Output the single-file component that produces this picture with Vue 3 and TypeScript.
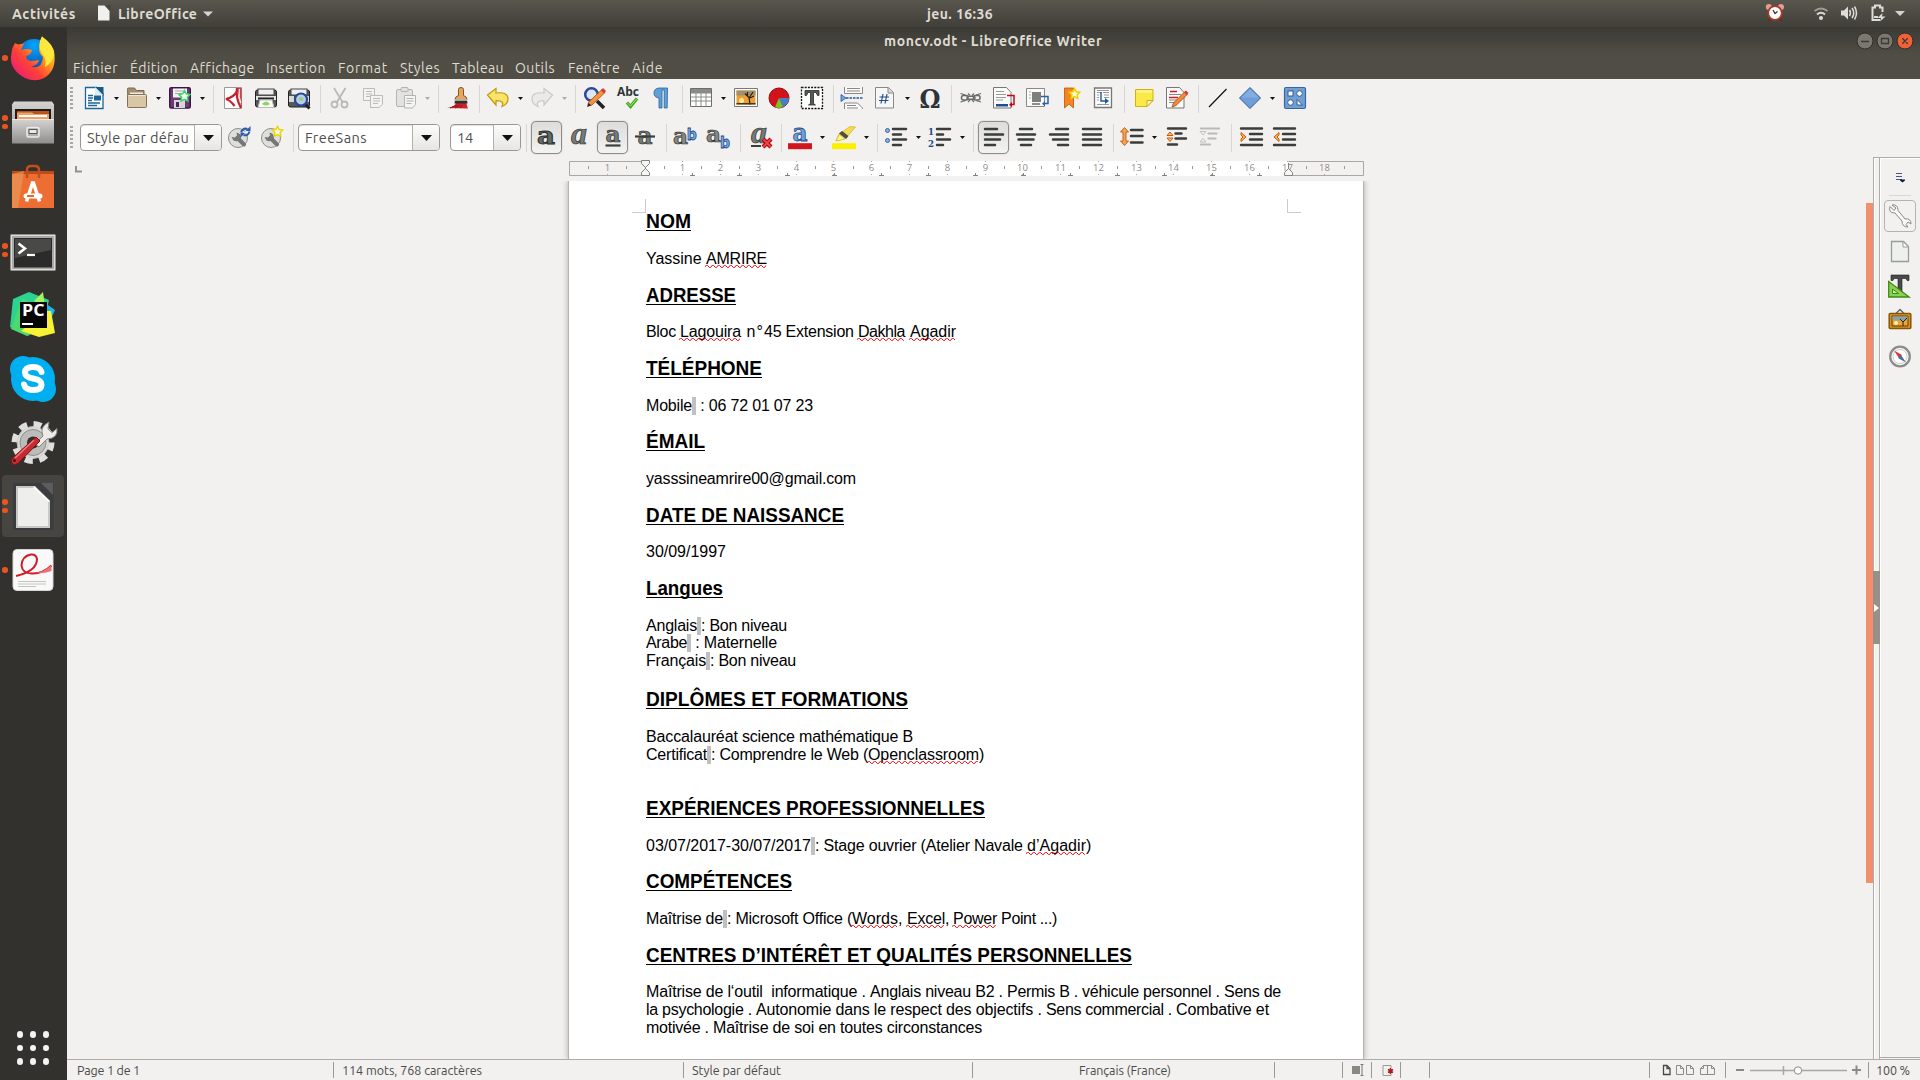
<script setup lang="ts">
interface Tool { k: string; c: number; w?: number; on?: boolean; off?: boolean; text?: string; tw?: number }
interface Seg { t: string; w: number; err?: boolean; nb?: boolean }
interface Line { y: number; h?: boolean; s: Seg[] }

// Makes a label fill the given width: headings are condensed, other texts get letter spacing
const vFit = {
  mounted(el: HTMLElement, binding: { value: number }) {
    const w = binding.value
    const natural = el.getBoundingClientRect().width
    el.style.width = `${w}px`
    if (el.closest('.head')) {
      el.style.transformOrigin = 'left'
      el.style.transform = `scaleX(${w / natural})`
    } else {
      const n = (el.textContent ?? '').length
      el.style.letterSpacing = `${(w - natural) / n}px`
    }
  },
}

const icons: Record<string, string> = {
  newdoc: `<path d="M3.5 1.5H15l6 6V22.5H3.5z" fill="#fff" stroke="#1d6497" stroke-width="1.3"/><path d="M13 1h8.5v9z" fill="#175a87"/><path d="M13 1v8h8" fill="#dcecf5"/><path d="M6 9.500h5M6 12h5M6 14.500h4M6 17h12M6 19.500h9" stroke="#1b6597" stroke-width="1.300"/><rect x="12" y="9.500" width="7" height="5" fill="#1b6597"/>`,
  folder: `<path d="M2.500 4.500V3q0-1 1-1h6l2 2.500h7.500V13h-16z" fill="#a58f70" stroke="#7b6a50"/><path d="M5 6.500h13V10H5z" fill="#eee"/><rect x="2.500" y="8.500" width="19" height="13" rx="1" fill="#d9c6a5" stroke="#84714f"/><path d="M3.500 9.500h17" stroke="#f1e6d0"/>`,
  save: `<rect x="1.700" y="1.700" width="20.600" height="20.300" rx="1.500" fill="#6d3a76" stroke="#3d1546" stroke-width="1.400"/><rect x="5" y="2.500" width="14" height="9" fill="#f2f2f2"/><path d="M7 5h10M7 7.500h10" stroke="#aaa"/><rect x="6" y="14" width="11" height="8" fill="#d8d4da"/><rect x="8" y="16" width="3" height="5" fill="#4b2653"/><path d="M16.500 4.500l1.800 3.300 3.700.7-2.600 2.800.5 3.700-3.400-1.600-3.400 1.600.5-3.700-2.600-2.800 3.700-.7z" fill="#f2fff2" stroke="#3ed667" stroke-width="1.500"/>`,
  pdf: `<path d="M3.500 1.500h17v21h-17z" fill="#fdfdfd" stroke="#999"/><path d="M16 2q-1.500 10 4 20M16 5q-2.500 6-11 8 4 1 8.500 7" fill="none" stroke="#c6222d" stroke-width="2.300"/><path d="M16 2h4.500v20z" fill="#c6222d" opacity=".85"/><path d="M18.300 3q-.8 8 1.500 14" stroke="#fff" fill="none"/>`,
  print: `<rect x="1.500" y="4" width="21" height="17" rx="2" fill="#55595a" stroke="#222"/><rect x="4" y="3" width="16" height="6" fill="#eee" stroke="#444"/><path d="M2 10h20v4H2z" fill="#e4e4e0"/><path d="M4 12.500h16" stroke="#222" stroke-width="2"/><path d="M6 14h12l2 7.500H4z" fill="#fbfff5" stroke="#bbb"/><path d="M8 18q4-5 8 0-4 3-8 0" fill="#8ed16a"/>`,
  preview: `<rect x="1.500" y="4" width="21" height="17" rx="2" fill="#55595a" stroke="#222"/><rect x="4" y="3" width="16" height="6" fill="#eee" stroke="#444"/><path d="M2 10h5v6H2zM18 10h4v6h-4z" fill="#d8d8d4"/><path d="M18 18l4.500 4.500" stroke="#222" stroke-width="3"/><circle cx="14" cy="13.500" r="6" fill="#b7cfe6" stroke="#27479b" stroke-width="2.200"/><path d="M11 13q3-4 6 0-3 4-6 0" fill="#9ccd82"/>`,
  cut: `<g fill="none" stroke="#b9b9b7" stroke-width="1.800"><path d="M6 2l8.500 14M17.500 2L9 16"/><circle cx="6.500" cy="18.500" r="3"/><circle cx="16.500" cy="18.500" r="3"/></g>`,
  copy: `<g fill="#f3f3f2" stroke="#bbbbb9"><path d="M2.500 2.500h11v12h-11z"/><path d="M5 5.500h6M5 8h6M5 10.500h4"/><path d="M9.500 9.500h12v9l-3.500 3h-8.500z"/><path d="M12 12.500h7M12 15h7M12 17.500h5"/></g>`,
  paste: `<g fill="#e2e2e0" stroke="#b4b4b2"><rect x="2.500" y="3.500" width="16" height="17" rx="1.500"/><rect x="7" y="1.500" width="7" height="4" rx="1"/><path d="M10.500 9.500h11v9l-3 3.500h-8z" fill="#f4f4f3"/><path d="M12.500 12.500h7M12.500 15h7M12.500 17.500h5"/></g>`,
  brush: `<path d="M1 22q8-1 9-5l10-1q1 4 2 6.500z" fill="#d22028"/><path d="M4 22l7-3M9 22l5-3M14 22l2-3" stroke="#8c1016"/><path d="M9 14h12l.5 3.500H8.500z" fill="#2f2f2f"/><path d="M9 13.500q0-3 3.500-4V3.500q0-2 2.500-2t2.500 2v6q3.500 1 3.500 4z" fill="#e2a75c" stroke="#84551c"/><path d="M9 14h12" stroke="#ccc" stroke-width="1.500"/>`,
  undo: `<path d="M1.500 9L10 2.500V7q12-1.500 12 6 0 5-6 7.500 3-6-6-5.800v4.300z" fill="#f7e468" stroke="#c39b08" stroke-width="1.200"/>`,
  redo: `<path d="M22.500 9L14 2.500V7Q2 5.500 2 13q0 5 6 7.500-3-6 6-5.800v4.300z" fill="#eaeaea" stroke="#cacac9" stroke-width="1.200"/>`,
  find: `<path d="M14 15l7 7" stroke="#222" stroke-width="3.500"/><circle cx="8.500" cy="8.500" r="6.300" fill="#dce7f4" stroke="#29479e" stroke-width="2.500"/><path d="M4.500 20.500l1.200-4.500L19 3.500l3 3L9 19z" fill="#f6913d" stroke="#a44b10" stroke-width=".8"/><path d="M18 4.500L20 2l3 3-2 2.500z" fill="#dc3b35"/><path d="M4.500 20.500l1-3.500 2.700 2.300z" fill="#222"/>`,
  abc: `<text x="12" y="10" text-anchor="middle" font-family="Open Sans, sans-serif" font-weight="700" font-size="11.500" textLength="22" lengthAdjust="spacingAndGlyphs" fill="#2e3436">Abc</text><path d="M11 16.500l3.500 4L21 12.500" fill="none" stroke="#3fa51a" stroke-width="3.200"/><path d="M11.300 16.800l3.200 3.300 6-7.200" fill="none" stroke="#a8ef73"/>`,
  para: `<path d="M18.500 2H10Q5 2.500 5 7t5 5v10h3V4h2.200v18h3z" fill="#629fd5" stroke="#2462a4" stroke-width=".8"/>`,
  table: `<path d="M1.500 2.500h21v18h-21z" fill="#fff" stroke="#6b6e6b"/><path d="M2 3h20v4.500H2z" fill="#888a85"/><path d="M2 11h20M2 15h20M7 3v17.500M12 3v17.500M17 3v17.500" stroke="#8b8e89" fill="none"/>`,
  image: `<path d="M.5 2.500h23v18H.5z" fill="#fff" stroke="#777"/><path d="M2.500 4.500h19v14h-19z" fill="#ed9f36"/><path d="M2.500 4.500h19v5h-19z" fill="#a3906c"/><circle cx="7.500" cy="14.500" r="2.500" fill="#ffec91"/><path d="M16 18.500l-1-7-4-4M15 12l4-6M16 12l4-2M13.500 10v-4" stroke="#251b10" stroke-width="1.200" fill="none"/><path d="M2.500 17h19v1.500h-19z" fill="#4b3216"/>`,
  chart: `<circle cx="12" cy="12" r="10" fill="#d2131b" stroke="#99090f"/><path d="M12 12h10A10 10 0 0 1 16 21z" fill="#477ec4"/><path d="M12 12l4 9a10 10 0 0 1-8 .3z" fill="#77c52b"/>`,
  frame: `<rect x="1.500" y="1.500" width="21" height="21" fill="#fff" stroke="#111" stroke-width="1.300" stroke-dasharray="2 1.200"/><path d="M5 4.500h14v5h-1.500L16 6.500h-2.500v11l2 1.500h-7l2-1.500v-11H8L6.500 9.500H5z" fill="#555a56" stroke="#2a2d2a" stroke-width=".8"/>`,
  pgbreak: `<g stroke="#888" fill="#fafafa"><path d="M4.500 1v6.500h18V1"/><path d="M7 2.500h13M7 5h13"/><path d="M4.500 23v-6h13l5 5v1"/><path d="M7 19.500h9M7 22h11"/></g><path d="M6 12h17" stroke="#1d58a6" stroke-width="1.500" stroke-dasharray="2.500 1"/><path d="M1 8.500l5 3.500-5 3.500z" fill="#7aa6dd" stroke="#1d58a6" stroke-width=".8"/>`,
  field: `<path d="M3.500 1.500h13l5 5v15.500h-18z" fill="#f7f7f7" stroke="#868886"/><path d="M16 1.500V7h5.500" fill="#ddd" stroke="#868886"/><path d="M9 17.500l2-9.500M13 17.500l2-9.500M7.500 11h9.500M7 14.500h9.500" stroke="#224d91" stroke-width="1.200"/>`,
  omega: `<text x="12" y="22" text-anchor="middle" font-family="DejaVu Serif, serif" font-weight="700" font-size="26" textLength="21" lengthAdjust="spacingAndGlyphs" fill="#2e3436">Ω</text>`,
  link: `<g fill="none" stroke="#686b68" stroke-width="1.500"><rect x="2.500" y="9.500" width="6.500" height="4.500" rx="2"/><rect x="8" y="10.200" width="8" height="3" rx="1.500"/><rect x="14.500" y="9.500" width="6.500" height="4.500" rx="2"/><path d="M1.500 7.500l5 1.500M1.500 16l5-1.500M22 7.500l-5 1.500M22 16l-5-1.500M9 7.500l2 2M9 16l2-2M15 7.500l-2 2M15 16l-2-2" stroke-width="1.200"/></g>`,
  footnote: `<path d="M1.500 1.500h13l4.500 5V22h-17.500z" fill="#fafafa" stroke="#777"/><path d="M4 5.500h8M4 8.500h10M4 11.500h10M4 14h7" stroke="#999"/><path d="M4 18h12v2.500H4z" fill="#1d4f91"/><path d="M15 9.500h7v9h-3" fill="none" stroke="#c00b12" stroke-width="1.500"/><path d="M20 16l-3 2.700 3 2.500z" fill="#c00b12"/>`,
  endnote: `<path d="M1.500 2.500h18v18h-18z" fill="#fafafa" stroke="#888"/><path d="M7 6h9v10H7z" fill="#7d807c"/><path d="M4 6h2M4 9h2M4 12h2" stroke="#aaa"/><path d="M7 18h8" stroke="#222"/><path d="M16 10.500h7v7h-4" fill="none" stroke="#2c61ab" stroke-width="1.500"/><path d="M20 15l-3 2.700 3 2.600z" fill="#2c61ab"/>`,
  bookmark: `<path d="M6.500 2h9v20l-4.500-4-4.500 4z" fill="#f5851f" stroke="#b95505" stroke-width=".8"/><path d="M16.500 2.500l1.700 3.200 3.600.5-2.600 2.600.6 3.600-3.300-1.700-3.200 1.700.6-3.600-2.600-2.600 3.600-.5z" fill="#fffbd2" stroke="#efd000" stroke-width="1.500"/>`,
  xref: `<path d="M3.500 2h17v19.500h-17z" fill="#fdfdfd" stroke="#777" stroke-width="1.300"/><path d="M6 4.500h12M6 6.500h5M12 6.500h6M13 9h5M13 11.500h5M6 18.500h12M6 9h2M6 11.500h2M6 14h2" stroke="#999"/><path d="M10 6v9h5" fill="none" stroke="#1d579e" stroke-width="1.400"/><path d="M14 12l4 3-4 3z" fill="#1d579e"/>`,
  note: `<path d="M3.500 3.500h17.500v11l-6 6H3.500z" fill="#fbe94a" stroke="#d0b310"/><path d="M4.500 4.500h15.500v2H4.500z" fill="#fff49a"/><path d="M21 14.500h-6v6z" fill="#fffac8" stroke="#c8ad19"/>`,
  track: `<path d="M1.500 1.500h13l4.500 5V22h-17.500z" fill="#fafafa" stroke="#777"/><path d="M4 8.500h12M4 14h12M4 16.500h8" stroke="#888"/><path d="M5 5.500h7M4 11.500h9" stroke="#d71920" stroke-width="1.500"/><path d="M7 21l1.500-4L20 5.500l2.700 2.500L11 19.500z" fill="#f58c35" stroke="#9b470d" stroke-width=".8"/><path d="M19 6.500l2-2 2.500 2.500-2 2z" fill="#d83840"/>`,
  line: `<path d="M3 21L20.500 3" stroke="#111" stroke-width="1.200"/>`,
  diamond: `<path d="M12 1.500L22.500 12 12 22.500 1.500 12z" fill="#6f9ed8" stroke="#2c5d9c"/><path d="M12 3L20.500 11.500h-17z" fill="#91b7e5" opacity=".6"/>`,
  shapes: `<rect x="1.500" y="1.500" width="21" height="21" rx="1.500" fill="#729fcf" stroke="#3466a8" stroke-width="1.200"/><g fill="#fff" stroke="#2a5a9e"><rect x="5" y="5" width="5" height="5"/><circle cx="16.500" cy="7.500" r="2.800"/><circle cx="7.500" cy="16.500" r="2.800"/><path d="M14 19v-5.500l5.500 5.500z"/></g>`,
  styleupd: `<circle cx="11" cy="13" r="9.500" fill="#dededc" stroke="#8c8e89"/><path d="M10.500 13l6.500 6.500" stroke="#747773" stroke-width="4" stroke-linecap="round"/><path d="M9.500 7.500q5 1 4.500 6-3 4-7.500 2l-2-3.500 3.500.5 2-2z" fill="#747773"/><path d="M14 7q2.500-4.500 6.500-3M22.500 6.500q-1.500 5-6 3.500" fill="none" stroke="#2d5da8" stroke-width="2"/><path d="M18.500 6h5V1zM18.500 7.500h-5v5z" fill="#2d5da8"/><path d="M16 7l4 1" stroke="#fff"/>`,
  stylenew: `<circle cx="11" cy="13" r="9.500" fill="#dededc" stroke="#8c8e89"/><path d="M10.500 13l6.500 6.500" stroke="#747773" stroke-width="4" stroke-linecap="round"/><path d="M9.500 7.500q5 1 4.500 6-3 4-7.500 2l-2-3.500 3.500.5 2-2z" fill="#747773"/><path d="M17.500 1.500l1.700 3 3.400.6-2.400 2.500.5 3.500-3.200-1.500-3.200 1.500.5-3.500-2.400-2.500 3.400-.6z" fill="#fffce0" stroke="#edd400" stroke-width="1.500"/>`,
  bold: `<text x="12" y="18.500" text-anchor="middle" font-family="DejaVu Serif, serif" font-weight="700" font-size="24" textLength="18" lengthAdjust="spacingAndGlyphs" fill="#666a66" stroke="#2c302d" stroke-width="1">a</text>`,
  italic: `<text x="12" y="18.500" text-anchor="middle" font-family="Liberation Serif, serif" font-weight="700" font-style="italic" font-size="32" fill="#777a77" stroke="#2c302d" stroke-width=".7">a</text>`,
  under: `<text x="12" y="16.500" text-anchor="middle" font-family="DejaVu Serif, serif" font-weight="700" font-size="23" textLength="15" lengthAdjust="spacingAndGlyphs" fill="#777a77" stroke="#2c302d" stroke-width=".7">a</text><path d="M4.500 20.500h15" stroke="#3b3f3c" stroke-width="2.200"/>`,
  strike: `<text x="12" y="18.500" text-anchor="middle" font-family="DejaVu Serif, serif" font-weight="700" font-size="24" textLength="15" lengthAdjust="spacingAndGlyphs" fill="#777a77" stroke="#2c302d" stroke-width=".7">a</text><path d="M2 11.500h20" stroke="#3b3f3c" stroke-width="2.200"/>`,
  sup: `<text x="7.500" y="18.500" text-anchor="middle" font-family="DejaVu Serif, serif" font-weight="700" font-size="23" textLength="15" lengthAdjust="spacingAndGlyphs" fill="#858885" stroke="#2c302d" stroke-width=".7">a</text><text x="18.800" y="14.500" text-anchor="middle" font-family="DejaVu Sans, sans-serif" font-weight="700" font-size="16" textLength="10" lengthAdjust="spacingAndGlyphs" fill="#7ba5dc" stroke="#204a87" stroke-width=".8">b</text>`,
  sub: `<text x="7.500" y="17" text-anchor="middle" font-family="DejaVu Serif, serif" font-weight="700" font-size="23" textLength="15" lengthAdjust="spacingAndGlyphs" fill="#858885" stroke="#2c302d" stroke-width=".7">a</text><text x="19" y="22.500" text-anchor="middle" font-family="DejaVu Sans, sans-serif" font-weight="700" font-size="16" textLength="10" lengthAdjust="spacingAndGlyphs" fill="#7ba5dc" stroke="#204a87" stroke-width=".8">b</text>`,
  clear: `<text x="10" y="17.500" text-anchor="middle" font-family="Liberation Serif, serif" font-weight="700" font-style="italic" font-size="32" fill="#777a77" stroke="#2c302d" stroke-width=".7">a</text><path d="M2 21h10" stroke="#3b3f3c" stroke-width="2"/><path d="M14 14l8 8M22 14l-8 8" stroke="#a30309" stroke-width="4.200"/><path d="M14.300 14.300l7.400 7.400M21.700 14.300l-7.400 7.400" stroke="#f5404a" stroke-width="2"/>`,
  fcolor: `<text x="12" y="15.500" text-anchor="middle" font-family="DejaVu Serif, serif" font-weight="700" font-size="25" textLength="15" lengthAdjust="spacingAndGlyphs" fill="#6f9fdc" stroke="#204a87" stroke-width=".8">a</text><path d="M0 18.200h24v6H0z" fill="#d0171d"/>`,
  hilite: `<path d="M4 16l3-7L18 1.500l5.500.5L14 13z" fill="#f3dc54" stroke="#c9a70f" stroke-width=".6"/><path d="M7 8.500l3-2.500 6.500 5-2.500 3z" fill="#4a4c45"/><path d="M4 15.500l3.500-6 5.500 4.500-6 1.500z" fill="#fff58a" stroke="#d9b90c" stroke-width=".7"/><path d="M0 18.200h24v6H0z" fill="#fbf000"/>`,
  bullets: `<g fill="#8bb0dd" stroke="#3465a4"><circle cx="3.500" cy="5.500" r="2"/><circle cx="3.500" cy="15.500" r="2"/></g><path d="M9 4h13M9 9.500h8M9 14.500h13M9 20h8" stroke="#3a3d3b" stroke-width="2.500" stroke-linecap="round"/>`,
  numbers: `<text x="0" y="10" font-family="DejaVu Serif, serif" font-weight="700" font-size="10" textLength="6" lengthAdjust="spacingAndGlyphs" fill="#204a87">1</text><text x="0" y="21.500" font-family="DejaVu Serif, serif" font-weight="700" font-size="10" textLength="6" lengthAdjust="spacingAndGlyphs" fill="#204a87">2</text><path d="M9 4h13M9 9.500h6M9 14.500h13M9 20h6" stroke="#3a3d3b" stroke-width="2.500" stroke-linecap="round"/>`,
  left: `<path d="M3 4h12M3 9.500h18M3 14.500h15M3 20h10" stroke="#3a3d3b" stroke-width="2.500" stroke-linecap="round"/>`,
  center: `<path d="M6 4h12M3 9.500h18M4.500 14.500h15M7 20h10" stroke="#3a3d3b" stroke-width="2.500" stroke-linecap="round"/>`,
  right: `<path d="M9 4h12M3 9.500h18M6 14.500h15M11 20h10" stroke="#3a3d3b" stroke-width="2.500" stroke-linecap="round"/>`,
  justify: `<path d="M3 4h18M3 9.500h18M3 14.500h18M3 20h18" stroke="#3a3d3b" stroke-width="2.500" stroke-linecap="round"/>`,
  spacing: `<path d="M4.500 2.500l4 4.500H6v9h2.500l-4 4.500-4-4.500H3V7H.5z" fill="#f1a45a" stroke="#c65a0c" stroke-width=".9"/><path d="M11 5h11.500M11 11h11.500M11 17.500h11.500" stroke="#3a3d3b" stroke-width="2.500" stroke-linecap="round"/>`,
  parinc: `<path d="M3 3.500h18M10.500 8.500h6M10.500 13.500h10.500M3 19.500h9" stroke="#3a3d3b" stroke-width="2.400" stroke-linecap="round"/><path d="M2 10.500h6L5 7zM2 13h6l-3 3.500z" fill="#f7bd81" stroke="#ce5c00"/>`,
  pardec: `<path d="M3 3.500h18M10.500 8.500h8M10.500 13.500h7M3 19.500h9" stroke="#b9bab8" stroke-width="2.200" stroke-linecap="round"/><path d="M2 6.500h6L5 10zM2 17h6l-3-3.500z" fill="#eee" stroke="#c1c1bf"/>`,
  indent: `<path d="M2 3.500h21M11 9h12M11 14.500h12M2 20h21" stroke="#3a3d3b" stroke-width="2.400" stroke-linecap="round"/><path d="M2 7.500L7 12l-5 4.500V14l2-2-2-2z" fill="#fcaf5e" stroke="#ce5c00"/>`,
  outdent: `<path d="M2 3.500h21M11 9h12M11 14.500h12M2 20h21" stroke="#3a3d3b" stroke-width="2.400" stroke-linecap="round"/><path d="M7 7.500L2 12l5 4.500V14l-2-2 2-2z" fill="#fcaf5e" stroke="#ce5c00"/>`,
  firefox: `<defs><linearGradient id="fx" x1="1" y1="0" x2="0" y2="1"><stop offset="0" stop-color="#fff44f"/><stop offset=".35" stop-color="#ffa31a"/><stop offset=".6" stop-color="#ff4236"/><stop offset="1" stop-color="#e3128a"/></linearGradient><radialGradient id="fb" cx=".5" cy=".2" r=".8"><stop offset="0" stop-color="#00a8ff"/><stop offset="1" stop-color="#183d9d"/></radialGradient></defs><circle cx="25" cy="22" r="17" fill="url(#fb)"/><path d="M6 9l3 1.500 6-1-3 6.500q6-2 11 0-1 5-6 6 0 4 4 5 5 0 9-1-1 5-8 6.500Q33 36 34 23q-4-3-4-9 0-6 3-11.500Q42 11 45 17q3 17-7 25-10 7.500-22 2Q-1 35 2.500 19q.5-6 3.500-10z" fill="url(#fx)"/><path d="M33 2.500Q45 11 45 19q0 9-9 14 2-9-3-13-5-9 0-17.500z" fill="#ffe83c"/>`,
  files: `<defs><linearGradient id="fl" x1="0" y1="0" x2="0" y2="1"><stop offset="0" stop-color="#d5d4d2"/><stop offset="1" stop-color="#8f8e8c"/></linearGradient></defs><path d="M5 3.500h38l2 3v38H3v-38z" fill="url(#fl)"/><path d="M6 11h36v10H6z" fill="#1d1c1a"/><path d="M8 13h32v7H8z" fill="#b6541b"/><path d="M8 14.500h15l2 1.500h15v5H8z" fill="#f0a266"/><path d="M10 17h28v2H10z" fill="#fff"/><path d="M3 21h42v24.500H3z" fill="url(#fl)"/><path d="M3 21.500h42" stroke="#e8e8e6"/><rect x="18" y="29.500" width="12" height="9.500" rx="1.500" fill="#b1b0ae" stroke="#ecebe9" stroke-width="1.500"/><path d="M20 31.500h8v4h-8z" fill="#e9e9e8" stroke="#555"/>`,
  software: `<path d="M3 9h42v37H3z" fill="#ec6e33"/><path d="M3 9h42v3H3z" fill="#c04a15"/><path d="M3 12l12-3-6 37H3z" fill="#e99a5b" opacity=".65"/><path d="M18 16V8q0-4 4-4h4q4 0 4 4v8" fill="none" stroke="#c14e20" stroke-width="2.500"/><path d="M17.500 39.500L23.500 21h1L30.500 39.500" fill="none" stroke="#fff" stroke-width="3.500"/><path d="M17 34h14" stroke="#fff" stroke-width="5" stroke-linecap="round"/><path d="M18 34h7" stroke="#e9682d" stroke-width="2"/>`,
  terminal: `<rect x="1.500" y="8.500" width="45" height="36" rx="1" fill="#dcdcdb" stroke="#8f8f8d"/><rect x="3" y="10" width="42" height="33" fill="#a8a8a6"/><path d="M5 12h38v29.500H5z" fill="#2b2b2b"/><path d="M6 13h36v11L6 32z" fill="#5d5d5b" opacity=".6"/><path d="M9.500 17.500l6.500 5-6.500 5" fill="none" stroke="#fff" stroke-width="2.500"/><path d="M18 29h8" stroke="#fff" stroke-width="2.200"/>`,
  pycharm: `<path d="M4 9l16-7 20 8-6 26-15 10-18-9z" fill="#2bd391"/><path d="M13 8L2 39l16 7 14-26z" fill="#4cd96e"/><path d="M36 13l10 7-7 15-6-8z" fill="#1cb8ec"/><path d="M25 11l9-9 2 15z" fill="#aaf25c"/><path d="M38 21h4l4 22-16 4-18-6z" fill="#f7f235"/><path d="M11 12h27v26H11z" fill="#070707"/><text x="13" y="26" font-family="Open Sans, sans-serif" font-weight="700" font-size="16" textLength="22.500" lengthAdjust="spacingAndGlyphs" fill="#fff">PC</text><path d="M13 34h11" stroke="#fff" stroke-width="2"/>`,
  skype: `<g transform="translate(0 1)"><circle cx="14" cy="14" r="13" fill="#00aff0"/><circle cx="34" cy="34" r="13" fill="#00aff0"/><circle cx="24" cy="24" r="22" fill="#00aff0"/><path d="M32.500 17q-1.500-5-8.500-5-8 0-8 5.500 0 4.500 8 6 8.500 1.500 8.500 6 0 5.500-8.500 5.500-7.500 0-9-5.500" fill="none" stroke="#fff" stroke-width="6" stroke-linecap="round"/></g>`,
  gear: `<circle cx="24" cy="24.500" r="16" fill="#d9d9d7" stroke="#b5b5b3"/><circle cx="24" cy="24.500" r="18.500" fill="none" stroke="#dededc" stroke-width="6" stroke-dasharray="8 6.530"/><circle cx="24" cy="24.500" r="13" fill="#bcbcba" stroke="#8e8e8c"/><circle cx="24" cy="24.500" r="6" fill="#33312d"/><path d="M26 26l8-8q-4-9 6-14l-1 7 4 3.500 5-4q1 10-10 10.500l-8 8z" fill="#ecebea" stroke="#85847f"/><path d="M27 19l4 4L9 45.500q-4 3-6 0-2-3 1-6z" fill="#c72a2f" stroke="#7a1115"/><path d="M25 22L6 40" stroke="#ef7b7e" stroke-width="1.500"/><circle cx="5.500" cy="42.500" r="1.500" fill="#4a0f11"/>`,
  writer: `<path d="M5 1h38q1.500 0 1.500 2v43q0 2-1.500 2H6q-2 0-2-2V3q0-2 2-2z" fill="#3a3c3f"/><path d="M32 1h12v12z" fill="#5b5c5e"/><path d="M7 4h19L41 19v27H7z" fill="#c8c8c7"/><path d="M9 6h16l14 14v24H9z" fill="#eeeeed"/><path d="M25 4l16 15-2 1L24.500 6z" fill="#fff"/>`,
  evince: `<rect x="4" y="3.500" width="40" height="41" rx="4" fill="#f9f9f9" stroke="#d5d5d4"/><path d="M7 30Q28 25 28 13q-1-5-6-4.500-9 1.500-9.500 11 1 8.500 11.500 8 10 0 18.500-8" fill="none" stroke="#cf1c28" stroke-width="2"/><path d="M26 27q9-1 16.500-8v6q-8 3-16.500 2" fill="#e87279"/><path d="M9 35.500h28M9 38h28M9 40.500h18" stroke="#c3c3c2" stroke-width="1.200"/>`,
  wrench: `<path d="M2 2.500l4 4 2-2.500-4-3Q10 0 10 6.500L17 15q6-1 6 5l-3-2-2 2.500 2 2.500q-6 0-6-6L7 9Q0 9 2 2.500z" fill="#fafafa" stroke="#888"/>`,
  page: `<path d="M3.500 1.500h12l5 5v15h-17z" fill="#eef0ee" stroke="#999b98" stroke-width="1.300"/><path d="M15 1.500l5.500 5.500H15z" fill="#fff" stroke="#999b98"/>`,
  styles: `<path d="M3 0h18v5.500h-2l-1-2h-4v13l2 2H8l2-2v-13H6l-1 2H3z" fill="#484b4a" stroke="#1e1f1f" stroke-width=".6"/><path d="M.7 6.500V22h20.500z" fill="#8bcf5a" stroke="#3e8d0a" stroke-width="1.300"/><path d="M4.500 14v4.500h6z" fill="#c9efae" stroke="#3e8d0a"/>`,
  gallery: `<path d="M8 4.500l4-4 4 4" fill="none" stroke="#666" stroke-width="1.500"/><rect x="1.200" y="4.500" width="21.600" height="15" rx="1" fill="#d8951e" stroke="#885407" stroke-width="1.500"/><path d="M4 7h16v10H4z" fill="#e9a43a" stroke="#68410b"/><path d="M4.500 7.500h15v4h-15z" fill="#8aa1ac"/><circle cx="8" cy="14" r="2" fill="#fff2a1"/><path d="M15 17v-4l-3-3M15 13l4-4" stroke="#222" fill="none"/>`,
  compass: `<circle cx="12" cy="11.500" r="9.800" fill="#f8f8f8" stroke="#8b8d8a" stroke-width="2.300"/><circle cx="12" cy="11.500" r="7" fill="#fff" stroke="#ccc"/><path d="M6 5.500l8 4.500-3 3z" fill="#dd3035"/><path d="M18 17.500L10 13l3-3z" fill="#466da6"/>`,
  menu: `<path d="M8 8.500h6M8 11.500h6M8 14.500h6" stroke="#4b5684" stroke-width="1.200"/><path d="M12 14.500h5v1l-2.500 2-2.500-2z" fill="#111c38"/>`,
}

const std: Tool[] = [
  { k: 'grip', c: 71.5, w: 3 }, { k: 'newdoc', c: 94 }, { k: 'arrow', c: 116.5 }, { k: 'folder', c: 137 }, { k: 'arrow', c: 158.5 },
  { k: 'save', c: 180 }, { k: 'arrow', c: 202.5 }, { k: 'sep', c: 213.5 }, { k: 'pdf', c: 233 }, { k: 'print', c: 266 }, { k: 'preview', c: 299 },
  { k: 'sep', c: 320.5 }, { k: 'cut', c: 340 }, { k: 'copy', c: 373 }, { k: 'paste', c: 406 }, { k: 'arrow', c: 427.5, off: true }, { k: 'sep', c: 438.5 },
  { k: 'brush', c: 458 }, { k: 'sep', c: 479.5 }, { k: 'undo', c: 498 }, { k: 'arrow', c: 520.5 }, { k: 'redo', c: 542 }, { k: 'arrow', c: 564.5, off: true },
  { k: 'sep', c: 575.5 }, { k: 'find', c: 595 }, { k: 'abc', c: 628 }, { k: 'para', c: 661 }, { k: 'sep', c: 682.5 }, { k: 'table', c: 701 }, { k: 'arrow', c: 723.5 },
  { k: 'image', c: 746 }, { k: 'chart', c: 779 }, { k: 'frame', c: 812 }, { k: 'sep', c: 833.5 }, { k: 'pgbreak', c: 852 }, { k: 'field', c: 884 }, { k: 'arrow', c: 907.5 },
  { k: 'omega', c: 930 }, { k: 'sep', c: 951.5 }, { k: 'link', c: 971 }, { k: 'footnote', c: 1004 }, { k: 'endnote', c: 1037 }, { k: 'bookmark', c: 1070 }, { k: 'xref', c: 1103 },
  { k: 'sep', c: 1124.5 }, { k: 'note', c: 1144 }, { k: 'track', c: 1177 }, { k: 'sep', c: 1198.5 }, { k: 'line', c: 1218 }, { k: 'diamond', c: 1250 }, { k: 'arrow', c: 1272.5 }, { k: 'shapes', c: 1295 },
]
const fmt: Tool[] = [
  { k: 'grip', c: 71.5, w: 3 }, { k: 'combo', c: 151, w: 142, text: 'Style par défau', tw: 102 }, { k: 'styleupd', c: 239 }, { k: 'stylenew', c: 272 }, { k: 'sep', c: 293.5 },
  { k: 'combo', c: 369, w: 142, text: 'FreeSans', tw: 62 }, { k: 'combo', c: 485.5, w: 71, text: '14', tw: 16 }, { k: 'sep', c: 526.5 },
  { k: 'bold', c: 546, w: 31, on: true }, { k: 'italic', c: 579 }, { k: 'under', c: 612.5, w: 31, on: true }, { k: 'strike', c: 645 }, { k: 'sep', c: 666.5 }, { k: 'sup', c: 685 }, { k: 'sub', c: 718 },
  { k: 'sep', c: 740.5 }, { k: 'clear', c: 761 }, { k: 'sep', c: 781.5 }, { k: 'fcolor', c: 800 }, { k: 'arrow', c: 822.5 }, { k: 'hilite', c: 844 }, { k: 'arrow', c: 866.5 }, { k: 'sep', c: 877.5 },
  { k: 'bullets', c: 896 }, { k: 'arrow', c: 918.5 }, { k: 'numbers', c: 940 }, { k: 'arrow', c: 962.5 }, { k: 'sep', c: 973.5 }, { k: 'left', c: 993.5, w: 31, on: true }, { k: 'center', c: 1026 },
  { k: 'right', c: 1059 }, { k: 'justify', c: 1092 }, { k: 'sep', c: 1113.5 }, { k: 'spacing', c: 1132 }, { k: 'arrow', c: 1154.5 }, { k: 'parinc', c: 1177 }, { k: 'pardec', c: 1210 }, { k: 'sep', c: 1231.5 },
  { k: 'indent', c: 1251 }, { k: 'outdent', c: 1284 },
]
const widthOf = (t: Tool) => t.w ?? (t.k === 'sep' ? 1 : t.k === 'arrow' ? 5 : 24)
function place(items: Tool[]) {
  let end = 67
  return items.map((t) => {
    const w = widthOf(t)
    const ml = t.c - w / 2 - end
    end = t.c + w / 2
    return { ...t, style: { marginLeft: `${ml}px`, width: `${w}px` } }
  })
}
const toolbars = [place(std), place(fmt)]

const menus = [
  { t: 'Fichier', x: 73, w: 45 }, { t: 'Édition', x: 130, w: 48 }, { t: 'Affichage', x: 190, w: 64 }, { t: 'Insertion', x: 266, w: 60 },
  { t: 'Format', x: 338, w: 50 }, { t: 'Styles', x: 400, w: 40 }, { t: 'Tableau', x: 452, w: 52 }, { t: 'Outils', x: 515, w: 40 }, { t: 'Fenêtre', x: 568, w: 52 }, { t: 'Aide', x: 632, w: 31 },
].map((m, i, a) => ({ ...m, gap: m.x - (i ? a[i - 1].x + a[i - 1].w : 67) }))

const dock = [
  { k: 'firefox', n: 1 }, { k: 'files', n: 2 }, { k: 'software', n: 0 }, { k: 'terminal', n: 2 }, { k: 'pycharm', n: 0 },
  { k: 'skype', n: 0 }, { k: 'gear', n: 0 }, { k: 'writer', n: 2, on: true }, { k: 'evince', n: 1 },
]

const head = (y: number, t: string, w: number): Line => ({ y, h: true, s: [{ t, w }] })
const gap: Seg = { t: '\u00a0', w: 4, nb: true }
const lines: Line[] = [
  head(228, 'NOM', 45),
  { y: 264, s: [{ t: 'Yassine ', w: 60 }, { t: 'AMRIRE', w: 61, err: true }] },
  head(302, 'ADRESSE', 90),
  { y: 337, s: [{ t: 'Bloc ', w: 34 }, { t: 'Lagouira', w: 61, err: true }, { t: ' n°', w: 23 }, { t: '45 Extension ', w: 94 }, { t: 'Dakhla', w: 47, err: true }, { t: ' ', w: 5 }, { t: 'Agadir', w: 46, err: true }] },
  head(375, 'TÉLÉPHONE', 116),
  { y: 411, s: [{ t: 'Mobile', w: 46 }, gap, { t: ' : 06 72 01 07 23', w: 117 }] },
  head(448, 'ÉMAIL', 59),
  { y: 484, s: [{ t: 'yasssineamrire00@gmail.com', w: 210 }] },
  head(522, 'DATE DE NAISSANCE', 198),
  { y: 557, s: [{ t: '30/09/1997', w: 80 }] },
  head(595, 'Langues', 77),
  { y: 631, s: [{ t: 'Anglais', w: 51 }, gap, { t: ': Bon niveau', w: 86 }] },
  { y: 648, s: [{ t: 'Arabe', w: 41 }, gap, { t: ' : Maternelle', w: 86 }] },
  { y: 666, s: [{ t: 'Français', w: 60 }, gap, { t: ': Bon niveau', w: 86 }] },
  head(706, 'DIPLÔMES ET FORMATIONS', 262),
  { y: 742, s: [{ t: 'Baccalauréat ', w: 96 }, { t: 'science ', w: 57 }, { t: 'mathématique B', w: 114 }] },
  { y: 760, s: [{ t: 'Certificat', w: 61 }, gap, { t: ': Comprendre le Web (', w: 157 }, { t: 'Openclassroom', w: 111, err: true }, { t: ')', w: 5 }] },
  head(815, 'EXPÉRIENCES PROFESSIONNELLES', 339),
  { y: 851, s: [{ t: '03/07/2017-30/07/2017', w: 165 }, gap, { t: ': Stage ouvrier (Atelier Navale ', w: 212 }, { t: 'd’Agadir', w: 59, err: true }, { t: ')', w: 5 }] },
  head(888, 'COMPÉTENCES', 146),
  { y: 924, s: [{ t: 'Maîtrise de', w: 77 }, gap, { t: ': Microsoft Office (', w: 125 }, { t: 'Words', w: 46, err: true }, { t: ', ', w: 9 }, { t: 'Excel', w: 38, err: true }, { t: ', ', w: 8 }, { t: 'Power', w: 44, err: true }, { t: ' Point ...)', w: 60 }] },
  head(962, 'CENTRES D’INTÉRÊT ET QUALITÉS PERSONNELLES', 486),
  { y: 997, s: [{ t: 'Maîtrise de l‘outil  informatique . ', w: 224 }, { t: 'Anglais niveau B2 . ', w: 137 }, { t: 'Permis B . ', w: 75 }, { t: 'véhicule personnel . ', w: 142 }, { t: 'Sens de', w: 57 }] },
  { y: 1015, s: [{ t: 'la psychologie . ', w: 110 }, { t: 'Autonomie dans le respect des objectifs . ', w: 290 }, { t: 'Sens commercial . ', w: 130 }, { t: 'Combative et', w: 93 }] },
  { y: 1033, s: [{ t: 'motivée . ', w: 67 }, { t: 'Maîtrise de soi en toutes circonstances', w: 269 }] },
]
let bottom = 181
const rows = lines.map((l) => {
  const height = l.h ? 22 : 18
  const top = l.y - (l.h ? 18 : 14)
  const mt = top - bottom
  bottom = top + height
  return { ...l, mt }
})
function wave(w: number) {
  let d = 'M0 1.5'
  for (let x = 0; x < w; x += 6) d += `l1.500 -1h1l2 2h1l.5-1`
  return d
}

const cm = 37.77
const zero = 76.3
const numbers = [-1, ...Array.from({ length: 18 }, (_, i) => i + 1)].map((n) => ({ n: Math.abs(n), x: Math.floor(zero + n * cm - 0.2) + 0.5 }))
const halves = Array.from({ length: 21 }, (_, i) => Math.floor(zero + (i - 1.5) * cm) + 0.5)
const tabs = Array.from({ length: 13 }, (_, i) => Math.floor(zero + (i + 1) * 47.24) + 0.5)
const side = [{ k: 'menu', h: 37 }, { k: 'wrench', h: 37 }, { k: 'page', h: 37 }, { k: 'styles', h: 34 }, { k: 'gallery', h: 34 }, { k: 'compass', h: 37 }]
</script>

<template>
  <div class="screen">
    <header class="topbar">
      <span v-fit="64" class="act">Activités</span>
      <svg class="doc" width="14" height="16" viewBox="0 0 14 16"><path d="M1 .5h6.500L12.500 6v9.500H1z" fill="#f0f0ee" /><path d="M9 0h4.500v5z" fill="#45443e" /></svg>
      <span v-fit="79" class="app">LibreOffice</span>
      <svg class="down" width="10" height="6" viewBox="0 0 10 6"><path d="M0 .5h10L5 5.500z" fill="#d6d4d0" /></svg>
      <span v-fit="66" class="clock">jeu. 16:36</span>
      <svg class="tray" width="160" height="27" viewBox="1760 0 160 27">
        <path d="M1770 19l-2 2M1780 19l2 2" stroke="#7b2818" stroke-width="2" />
        <circle cx="1768.800" cy="7" r="3" fill="#e79c92" /><circle cx="1781" cy="7" r="3" fill="#e79c92" />
        <circle cx="1775" cy="13" r="6.800" fill="#fff" stroke="#a53a26" stroke-width="1.800" />
        <path d="M1773 10l2 3.500 2.500-2" fill="none" stroke="#333" stroke-width="1.300" />
        <g fill="none" stroke="#dedcd8" stroke-width="2"><path d="M1814.500 11q6.500-5 13 0" opacity=".55" /><path d="M1817 14.500q4-3.500 8 0" /></g><circle cx="1821" cy="18" r="2" fill="#dedcd8" />
        <path d="M1841 10.500h3l4-4v13l-4-4h-3z" fill="#dedcd8" /><path d="M1849.500 10q2 3 0 6M1852 8q3.500 5 0 10M1854.500 6.500q4 6.500 0 13" fill="none" stroke="#dedcd8" stroke-width="1.500" />
        <path d="M1880 20h-7.500V7.500h2.500v-2h5v2h2.500V12M1874 17h4" fill="none" stroke="#dedcd8" stroke-width="2" /><path d="M1882.500 13l-5 5h3.500l-1 3.500 5.500-5h-3.500z" fill="#dedcd8" />
        <path d="M1895 11h10l-5 5z" fill="#d6d4d0" />
      </svg>
    </header>
    <div class="desk">
      <nav class="dock">
        <div v-for="d in dock" :key="d.k" class="launcher">
          <div class="tile" :class="{ on: d.on }"><svg width="48" height="48" viewBox="0 0 48 48" v-html="icons[d.k]" /></div>
          <div class="dots"><i v-for="n in d.n" :key="n" /></div>
        </div>
        <div class="apps"><i v-for="n in 9" :key="n" /></div>
      </nav>
      <main class="window">
        <div class="titlebar">
          <span v-fit="218" class="title">moncv.odt - LibreOffice Writer</span>
          <svg class="wbtns" width="60" height="20" viewBox="0 0 60 20">
            <g stroke="#2f2e2a"><circle cx="10" cy="10" r="8" fill="#7a7871" /><circle cx="30" cy="10" r="8" fill="#7a7871" /><circle cx="50" cy="10" r="8" fill="#ef6237" /></g>
            <path d="M6 10.500h8M26.500 7.500h7v5h-7zM47.300 7.300l5.400 5.400M52.700 7.300l-5.400 5.400" fill="none" stroke="#3a3935" stroke-width="1.300" />
          </svg>
        </div>
        <div class="menubar"><span v-for="m in menus" :key="m.t" v-fit="m.w" :style="{ marginLeft: m.gap + 'px' }">{{ m.t }}</span></div>
        <div v-for="(bar, b) in toolbars" :key="b" class="toolbar" :class="{ standard: b === 0 }">
          <div v-for="(t, i) in bar" :key="i" class="tool" :class="[t.k, { pressed: t.on, off: t.off }]" :style="t.style">
            <template v-if="t.k === 'combo'">
              <span class="field-text"><span v-fit="t.tw ?? 0">{{ t.text }}</span></span>
              <span class="combo-btn"><svg width="11" height="6" viewBox="0 0 11 6"><path d="M0 0h11L5.500 6z" fill="#111" /></svg></span>
            </template>
            <svg v-else-if="t.k === 'arrow'" width="5" height="3" viewBox="0 0 5 3"><path d="M0 0h5L2.500 3z" /></svg>
            <svg v-else-if="icons[t.k]" class="ico" width="24" height="24" viewBox="0 0 24 24" v-html="icons[t.k]" />
          </div>
        </div>
        <div class="body">
          <div class="editor">
            <div class="ruler-row">
              <svg class="tabsel" width="8" height="7" viewBox="0 0 8 7"><path d="M1 0v5.500h6" fill="none" stroke="#95938f" stroke-width="2" /></svg>
              <svg class="ruler" width="796" height="20" viewBox="0 0 796 20">
                <path d="M77 4h642v15H77z" fill="#fff" />
                <path d="M76.500 4.500H.5v14h76M719.500 4.500h75v14h-75" fill="none" stroke="#aaa8a5" />
                <path v-for="x in halves" :key="x" :d="`M${x} 9v3`" stroke="#999" />
                <g v-for="p in numbers" :key="p.x">
                  <text :x="p.x" y="14" text-anchor="middle">{{ p.n }}</text>
                  <path :d="`M${p.x} 4v1M${p.x} 17v1`" stroke="#aaa" />
                </g>
                <path v-for="x in tabs" :key="x" :d="`M${x} 16v3M${x - 2.500} 18.500h5`" stroke="#85837f" />
                <path d="M72.500 3.500h8v3l-4 4-4-4zM72.500 18.500h8v-3l-4-4-4 4zM76.500 10v2" fill="#f6f6f5" stroke="#85837f" />
                <path d="M715.500 18.500h8v-3l-4-4-4 4zM719.500 6v6" fill="#f6f6f5" stroke="#85837f" />
              </svg>
            </div>
            <div class="canvas">
              <article class="sheet">
                <i class="corner tl" /><i class="corner tr" />
                <div v-for="r in rows" :key="r.y" class="row" :class="{ head: r.h }" :style="{ marginTop: r.mt + 'px' }">
                  <span v-for="(s, i) in r.s" :key="i" class="seg" :class="{ nb: s.nb }"><span v-fit="s.w" class="run">{{ s.t }}</span><svg v-if="s.err" class="wave" :width="s.w" height="3" :viewBox="`0 0 ${s.w} 3`"><path :d="wave(s.w)" fill="none" stroke="#f00000" /></svg></span>
                </div>
              </article>
              <i class="scroll" />
            </div>
          </div>
          <div class="splitter"><div class="handle"><svg width="5" height="8" viewBox="0 0 5 8"><path d="M0 0l5 4-5 4z" fill="#fff" /></svg></div></div>
          <aside class="sidebar">
            <div v-for="s in side" :key="s.k" class="sitem" :class="s.k" :style="{ height: s.h + 'px' }"><svg width="24" height="24" viewBox="0 0 24 24" v-html="icons[s.k]" /></div>
          </aside>
        </div>
        <footer class="status">
          <div class="cell c1"><span v-fit="63">Page 1 de 1</span></div>
          <div class="cell c2"><span v-fit="140">114 mots, 768 caractères</span></div>
          <div class="cell c3"><span v-fit="89">Style par défaut</span></div>
          <div class="cell c4"><span v-fit="92">Français (France)</span></div>
          <div class="cell c5" />
          <div class="cell c6"><svg width="12" height="12" viewBox="0 0 12 12"><path d="M0 2h8v8H0z" fill="#898783" /><path d="M10 1v10M8.500 .5h3M8.500 11.500h3" stroke="#777" /></svg></div>
          <div class="cell c7"><svg width="13" height="13" viewBox="0 0 13 13"><path d="M9 4V1.500H1v10h8V10" fill="none" stroke="#999" /><path d="M8.500 4v6M6 5.500l5 3M11 5.500l-5 3" stroke="#b31919" stroke-width="1.500" /></svg></div>
          <div class="cell c7" />
          <div class="cell c8" />
          <div class="cell c9">
            <svg width="56" height="12" viewBox="0 0 56 12"><g fill="none"><path d="M1.500 1.500h3.500l3 3v6h-6.500zM5 1.500v3h3" stroke="#4a4844" stroke-width="1.300" /><path d="M14.500 1.500h4l3 3v6h-7zM18.500 1.500v3h3M24.500 1.500h4l3 3v6h-7zM28.500 1.500v3h3M45.500 1.500h-4l-3 3v6h7zM45.500 1.500h4l3 3v6h-7zM41.500 1.500v3h-3M49.500 1.500v3h3" stroke="#8c8a86" /></g></svg>
          </div>
          <div class="cell c10">
            <svg width="130" height="14" viewBox="0 0 130 14"><path d="M1 7h8M117 7h9M121.500 2.500v9" stroke="#8b8984" stroke-width="2" /><path d="M15 7.500h97M48.500 3v9" stroke="#a9a7a3" stroke-width="1.500" /><circle cx="63" cy="7.500" r="3.700" fill="#fff" stroke="#8b8984" /></svg>
          </div>
          <div class="zoom"><span v-fit="34">100 %</span></div>
        </footer>
      </main>
    </div>
  </div>
</template>

<style>
body { margin: 0; overflow: hidden; }
</style>

<style scoped>
.screen { width: 1920px; height: 1080px; display: flex; flex-direction: column; overflow: hidden; background: #f2f1f0; font-family: Ubuntu, "Noto Sans", "Open Sans", sans-serif; font-size: 14px; color: #4a4a48; }
.screen svg { display: block; flex: none; overflow: visible; }
.screen span { white-space: pre; display: inline-block; }
.topbar { height: 27px; flex: none; display: flex; align-items: center; background: linear-gradient(#59564d, #403f39); color: #dfdbd2; font-weight: 600; font-size: 14px; line-height: 26px; }
.act { margin-left: 12px; }
.doc { margin-left: 21px; margin-top: -2px; }
.app { margin-left: 7px; }
.down { margin-left: 6px; }
.clock { margin-left: 714px; }
.tray { margin-left: auto; }
.desk { flex: 1; display: flex; min-height: 0; }
.dock { width: 67px; flex: none; background: #33312d; display: flex; flex-direction: column; }
.launcher { height: 64px; position: relative; display: flex; align-items: center; justify-content: center; top: -1px; }
.tile { width: 62px; height: 62px; border-radius: 4px; display: flex; align-items: center; justify-content: center; margin-right: 1px; }
.tile.on { background: #474541; }
.dots { position: absolute; left: 2px; top: 0; height: 64px; display: flex; flex-direction: column; justify-content: center; gap: 3px; }
.dots i { width: 5.500px; height: 5.500px; border-radius: 50%; background: #e95420; }
.apps { margin: auto 0 15.500px 17px; display: grid; grid-template-columns: repeat(3, 6px); gap: 7px; }
.apps i { width: 6px; height: 6.500px; border-radius: 50%; background: #f4f3f2; }
.window { flex: 1; min-width: 0; display: flex; flex-direction: column; }
.titlebar { height: 28px; flex: none; display: flex; align-items: center; background: linear-gradient(#3b3a35, #504d45); color: #dfdbd2; font-weight: 600; line-height: 26px; }
.title { margin-left: 817px; }
.wbtns { margin-left: auto; margin-right: 5px; }
.menubar { height: 24px; flex: none; display: flex; background: #504d45; color: #dfdbd2; line-height: 27px; }
.toolbar { height: 40px; padding-top: 1px; box-sizing: border-box; flex: none; display: flex; align-items: center; }
.toolbar.standard { height: 38px; }
.tool { flex: none; display: flex; align-items: center; justify-content: center; height: 33px; box-sizing: border-box; }
.ico { margin-bottom: 1px; }
.toolbar .arrow { fill: #111; height: 31px; }
.toolbar .off { fill: #aaa; }
.toolbar .sep { height: 28px; background: #d8d6d3; }
.toolbar .grip { height: 23px; background: repeating-linear-gradient(#a9a7a4 0 2px, #f2f1f0 2px 4px); }
.pressed { border: 1px solid #8f8d89; border-radius: 5px; background: linear-gradient(#dddcda, #f3f3f2); box-shadow: 0 0 1px #777; }
.toolbar .combo { height: 27px; border: 1px solid #9a9894; border-radius: 4px; background: #fff; justify-content: flex-start; box-shadow: inset 0 1px 1px #ddd; }
.field-text { flex: 1; padding-left: 6px; line-height: 24px; font-size: 14.500px; color: #504e4b; }
.combo-btn { width: 26px; height: 25px; border-left: 1px solid #b1afab; background: linear-gradient(#fbfbfa, #e7e6e4); border-radius: 0 3px 3px 0; }
.screen .combo-btn { display: flex; align-items: center; justify-content: center; }
.body { flex: 1; min-height: 0; display: flex; }
.editor { flex: 1; min-width: 0; display: flex; flex-direction: column; }
.ruler-row { height: 24px; flex: none; display: flex; align-items: flex-start; }
.tabsel { margin: 9px 0 0 8px; }
.ruler { margin: 0 0 0 486px; }
.ruler text { font-family: "Open Sans", sans-serif; font-size: 9.500px; fill: #8f8d8a; }
.canvas { flex: 1; position: relative; overflow: hidden; display: flex; }
.sheet { margin-left: 502px; width: 794px; box-sizing: border-box; padding-left: 77px; background: #fff; position: relative; box-shadow: 0 0 0 1px #b5b4b2, 0 0 6px 1px #aaa9a7; font-family: "Liberation Sans", Arial, sans-serif; font-size: 16px; color: #000; }
.corner { position: absolute; top: 18px; width: 13px; height: 13px; border-bottom: 1.500px solid #ccc; }
.corner.tl { left: 63px; border-right: 1px solid #ccc; }
.corner.tr { left: 718px; border-left: 1px solid #ccc; }
.row { display: flex; height: 18px; line-height: 18px; }
.row.head { height: 22px; line-height: 23px; font-size: 20px; font-weight: 700; }
.screen .seg { position: relative; flex: none; display: flex; }
.head .seg::after { content: ""; position: absolute; left: 0; right: 0; top: 20px; height: 1px; background: #000; }
.seg.nb { background: #c0c0c0; }
.screen .wave { position: absolute; left: -1px; top: 15px; overflow: hidden; }
.scroll { position: absolute; right: 0; top: 22px; width: 7px; height: 680px; background: #f38f6a; }
.splitter { width: 7px; flex: none; box-sizing: border-box; border: 1px solid #aeacaa; border-bottom: 0; box-shadow: inset 1px 1px #fff; display: flex; flex-direction: column; }
.handle { width: 7px; height: 73px; margin: 413px 0 0 -1px; background: #95918a; display: flex; align-items: center; justify-content: center; flex: none; }
.sidebar { width: 40px; flex: none; box-sizing: border-box; border-top: 1px solid #aeacaa; border-bottom: 1px solid #aeacaa; box-shadow: inset 1px 1px #fff; margin-bottom: 1px; }
.sitem { display: flex; align-items: center; justify-content: center; }
.sitem.menu { border-bottom: 1px solid #d8d6d3; margin: 0 9px; }
.sitem.wrench { box-sizing: border-box; width: 32px; margin: 4px 0 1px 4px; border: 1px solid #b5b3b0; border-radius: 4px; height: 32px !important; }
.status { height: 20px; flex: none; display: flex; align-items: center; border-top: 1px solid #aeacaa; font-size: 12.500px; line-height: 18px; box-sizing: content-box; }
.cell { height: 16px; box-sizing: border-box; border-right: 1px solid #9b9996; flex: none; display: flex; align-items: center; }
.c1 { width: 267px; padding-left: 10px; }
.c2 { width: 350px; padding-left: 8px; }
.c3 { width: 289px; padding-left: 8px; }
.c4 { width: 302px; padding-left: 106px; }
.c5 { width: 68px; }
.c6 { width: 29px; padding-left: 9px; }
.c7 { width: 29px; padding-left: 10px; }
.c8 { width: 220px; }
.c9 { width: 76px; padding-left: 12px; }
.c10 { width: 143px; padding-left: 9px; }
.zoom { padding-left: 7px; }
</style>
